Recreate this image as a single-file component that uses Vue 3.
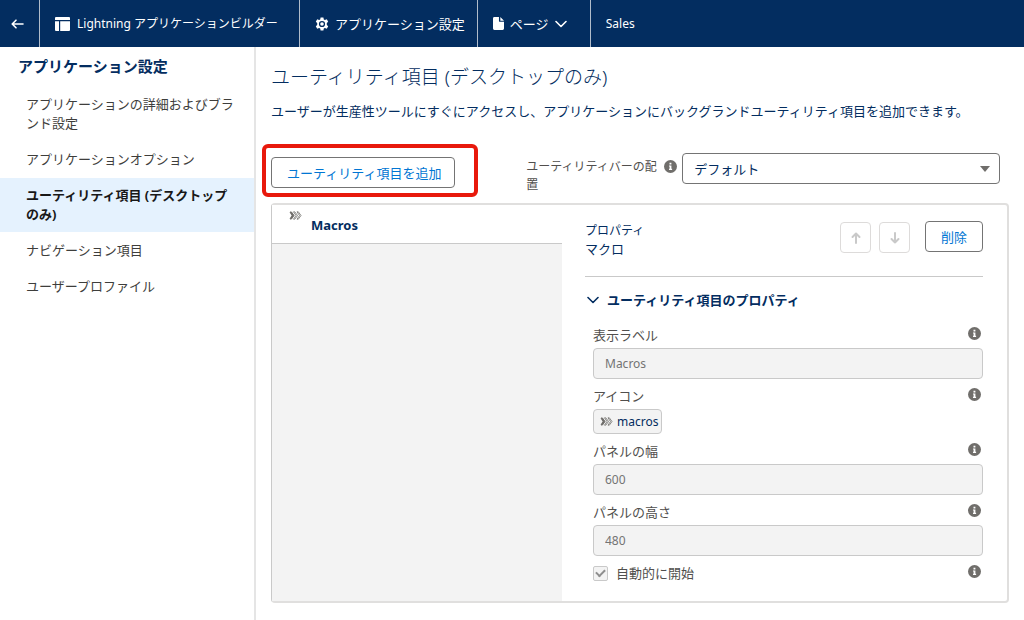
<script setup>
import { ref } from 'vue'

const navItems = [
  { label: 'アプリケーションの詳細およびブランド設定' },
  { label: 'アプリケーションオプション' },
  { label: 'ユーティリティ項目 (デスクトップのみ)', active: true },
  { label: 'ナビゲーション項目' },
  { label: 'ユーザープロファイル' },
]
const alignment = ref('default')
</script>

<template>
  <div class="app">
    <header class="topbar">
      <button class="back" type="button" aria-label="戻る">
        <svg width="13" height="10" viewBox="0 0 13 10" fill="none" stroke="currentColor" stroke-width="1.600" stroke-linecap="round" stroke-linejoin="round">
          <path d="M12 5H1.500M5 1.200L1.200 5 5 8.800" />
        </svg>
      </button>
      <div class="cell builder">
        <svg width="15" height="14" viewBox="0 0 15 14" fill="currentColor">
          <path d="M1 0h13a1 1 0 0 1 1 1v2H0V1a1 1 0 0 1 1-1zM0 4.200h4V14H1a1 1 0 0 1-1-1zM5.200 4.200H15V13a1 1 0 0 1-1 1H5.200z" />
        </svg>
        <span>Lightning アプリケーションビルダー</span>
      </div>
      <button class="cell settings" type="button">
        <svg width="14" height="14" viewBox="0 0 14 14" fill="currentColor" fill-rule="evenodd">
          <path d="M5.600.5h2.800l.4 1.900 1.100.6 1.900-.7 1.400 2.400L11.800 6v2l1.400 1.300-1.400 2.400-1.900-.7-1.100.6-.4 1.900H5.600l-.4-1.900-1.100-.6-1.900.7L.8 9.300 2.200 8V6L.8 4.700l1.400-2.400 1.900.7 1.100-.6zM7 3.900a3.100 3.100 0 1 0 0 6.200 3.100 3.100 0 0 0 0-6.200z" />
          <circle cx="7" cy="7" r="1.800" />
        </svg>
        <span>アプリケーション設定</span>
      </button>
      <button class="cell page" type="button">
        <svg width="11" height="13" viewBox="0 0 12 14" fill="currentColor">
          <path d="M1.500 0H6.500v4.200a1 1 0 0 0 1 1H12v7.300A1.500 1.500 0 0 1 10.500 14h-9A1.500 1.500 0 0 1 0 12.500v-11A1.500 1.500 0 0 1 1.500 0zM8 0l4 3.900H8z" />
        </svg>
        <span>ページ</span>
        <svg width="12" height="8" viewBox="0 0 12 8" fill="none" stroke="currentColor" stroke-width="1.600" stroke-linecap="round" stroke-linejoin="round">
          <path d="M1 1.500l5 5 5-5" />
        </svg>
      </button>
      <div class="cell name">Sales</div>
    </header>

    <div class="body">
      <aside class="sidebar">
        <h2>アプリケーション設定</h2>
        <nav>
          <a v-for="item in navItems" :key="item.label" href="#" :class="{ active: item.active }">{{ item.label }}</a>
        </nav>
      </aside>

      <main class="main">
        <h1>ユーティリティ項目 (デスクトップのみ)</h1>
        <p class="lead">ユーザーが生産性ツールにすぐにアクセスし、アプリケーションにバックグランドユーティリティ項目を追加できます。</p>

        <div class="toolbar">
          <div class="marked">
            <button class="add" type="button">ユーティリティ項目を追加</button>
          </div>
          <div class="align">
            <label for="alignment">ユーティリティバーの配置</label>
            <svg class="info" width="13" height="13" viewBox="0 0 13 13">
              <circle cx="6.500" cy="6.500" r="6.500" fill="#706e6b" />
              <path d="M5.500 2.800h1.900v1.600H5.500zM5 5.400h2.400v3.400h.7v1.100H5V8.800h.6V6.500H5z" fill="#fff" />
            </svg>
            <div class="select">
              <select id="alignment" v-model="alignment">
                <option value="default">デフォルト</option>
              </select>
              <svg width="10" height="6" viewBox="0 0 10 6" fill="#706e6b"><path d="M0 0h10L5 6z" /></svg>
            </div>
          </div>
        </div>

        <section class="panel">
          <div class="list">
            <button class="entry" type="button">
              <svg width="13" height="9" viewBox="0 0 13 9" fill="none" stroke="#706e6b">
                <path d="M1 1h1.500L5 4.500 2.500 8H1l2-3.500z" fill="#706e6b" />
                <path d="M4.500.8h1.300l2.700 3.700-2.700 3.700H4.500L7 4.500zM8 .8h1.300L12 4.500 9.300 8.200H8l2.500-3.700z" stroke-width=".8" />
              </svg>
              <span>Macros</span>
            </button>
          </div>

          <div class="props">
            <div class="head">
              <div class="titles">
                <div class="kind">プロパティ</div>
                <div class="what">マクロ</div>
              </div>
              <button class="move" type="button" disabled aria-label="上へ移動">
                <svg width="10" height="12" viewBox="0 0 10 12" fill="none" stroke="currentColor" stroke-width="2" stroke-linecap="round" stroke-linejoin="round"><path d="M5 11V1.500M1.500 5L5 1.500 8.500 5" /></svg>
              </button>
              <button class="move" type="button" disabled aria-label="下へ移動">
                <svg width="10" height="12" viewBox="0 0 10 12" fill="none" stroke="currentColor" stroke-width="2" stroke-linecap="round" stroke-linejoin="round"><path d="M5 1v9.500M1.500 7L5 10.500 8.500 7" /></svg>
              </button>
              <button class="delete" type="button">削除</button>
            </div>

            <button class="section" type="button">
              <svg width="12" height="8" viewBox="0 0 12 8" fill="none" stroke="currentColor" stroke-width="1.600" stroke-linecap="round" stroke-linejoin="round"><path d="M1 1.500l5 5 5-5" /></svg>
              <span>ユーティリティ項目のプロパティ</span>
            </button>

            <div class="fields">
              <div class="field">
                <div class="caption">
                  <label for="f-label">表示ラベル</label>
                  <svg class="info" width="13" height="13" viewBox="0 0 13 13">
                    <circle cx="6.500" cy="6.500" r="6.500" fill="#706e6b" />
                    <path d="M5.500 2.800h1.900v1.600H5.500zM5 5.400h2.400v3.400h.7v1.100H5V8.800h.6V6.500H5z" fill="#fff" />
                  </svg>
                </div>
                <input id="f-label" type="text" value="Macros" disabled />
              </div>
              <div class="field">
                <div class="caption">
                  <label for="f-icon">アイコン</label>
                  <svg class="info" width="13" height="13" viewBox="0 0 13 13">
                    <circle cx="6.500" cy="6.500" r="6.500" fill="#706e6b" />
                    <path d="M5.500 2.800h1.900v1.600H5.500zM5 5.400h2.400v3.400h.7v1.100H5V8.800h.6V6.500H5z" fill="#fff" />
                  </svg>
                </div>
                <button id="f-icon" class="chip" type="button">
                  <svg width="13" height="9" viewBox="0 0 13 9" fill="none" stroke="#706e6b">
                    <path d="M1 1h1.500L5 4.500 2.500 8H1l2-3.500z" fill="#706e6b" />
                    <path d="M4.500.8h1.300l2.700 3.700-2.700 3.700H4.500L7 4.500zM8 .8h1.300L12 4.500 9.300 8.200H8l2.500-3.700z" stroke-width=".8" />
                  </svg>
                  <span>macros</span>
                </button>
              </div>
              <div class="field">
                <div class="caption">
                  <label for="f-width">パネルの幅</label>
                  <svg class="info" width="13" height="13" viewBox="0 0 13 13">
                    <circle cx="6.500" cy="6.500" r="6.500" fill="#706e6b" />
                    <path d="M5.500 2.800h1.900v1.600H5.500zM5 5.400h2.400v3.400h.7v1.100H5V8.800h.6V6.500H5z" fill="#fff" />
                  </svg>
                </div>
                <input id="f-width" type="text" value="600" disabled />
              </div>
              <div class="field">
                <div class="caption">
                  <label for="f-height">パネルの高さ</label>
                  <svg class="info" width="13" height="13" viewBox="0 0 13 13">
                    <circle cx="6.500" cy="6.500" r="6.500" fill="#706e6b" />
                    <path d="M5.500 2.800h1.900v1.600H5.500zM5 5.400h2.400v3.400h.7v1.100H5V8.800h.6V6.500H5z" fill="#fff" />
                  </svg>
                </div>
                <input id="f-height" type="text" value="480" disabled />
              </div>
              <div class="caption auto">
                <label class="check"><input type="checkbox" checked disabled /><span>自動的に開始</span></label>
                <svg class="info" width="13" height="13" viewBox="0 0 13 13">
                  <circle cx="6.500" cy="6.500" r="6.500" fill="#706e6b" />
                  <path d="M5.500 2.800h1.900v1.600H5.500zM5 5.400h2.400v3.400h.7v1.100H5V8.800h.6V6.500H5z" fill="#fff" />
                </svg>
              </div>
            </div>
          </div>
        </section>
      </main>
    </div>
  </div>
</template>

<style>
body {
  background: #fff;
}
</style>

<style scoped>
* {
  box-sizing: border-box;
}
.app {
  display: flex;
  flex-direction: column;
  min-height: 100vh;
  font-family: "Noto Sans", "Noto Sans CJK JP", sans-serif;
  font-size: 13px;
  line-height: 20px;
  color: #032d60;
}
button,
input,
select {
  font: inherit;
  color: inherit;
  margin: 0;
}
button {
  padding: 0;
  border: 0;
  background: none;
}
svg {
  display: block;
  flex: none;
}
h1,
h2,
p {
  margin: 0;
}

.topbar {
  display: flex;
  height: 47px;
  background: #032d60;
  color: #fff;
}
.back {
  width: 39px;
  display: flex;
  align-items: center;
  padding-left: 11px;
}
.cell {
  display: flex;
  align-items: center;
  gap: 7px;
  padding: 0 12px 0 15px;
  border-left: 1px solid #b0bccb;
  white-space: nowrap;
}
.builder,
.name {
  font-size: 12px;
}
.builder {
  min-width: 260px;
}
.settings {
  gap: 6px;
}
.page {
  min-width: 113px;
  gap: 6px;
}

.body {
  flex: 1;
  display: grid;
  grid-template-columns: 256px minmax(0, 1fr);
}
.sidebar {
  border-right: 2px solid #e5e5e5;
}
.sidebar h2 {
  padding: 8px 18px 10px;
  font-size: 15px;
  line-height: 22px;
  font-weight: 700;
}
.sidebar nav {
  display: flex;
  flex-direction: column;
  gap: 1px;
}
.sidebar a {
  padding: 8px 20px 8px 26px;
  line-height: 19px;
  color: #3e3e3c;
  text-decoration: none;
}
.sidebar a.active {
  background: #e5f2fe;
  color: #181818;
  font-weight: 700;
}

.main {
  padding: 16px 15px;
}
h1 {
  font-size: 19px;
  line-height: 28px;
  font-weight: 300;
}
.lead {
  padding-top: 10px;
}
.toolbar {
  display: flex;
  align-items: flex-start;
  justify-content: space-between;
  padding: 32px 9px 0 0;
  height: 82px;
}
.marked {
  position: relative;
  margin-top: 4px;
}
.marked::after {
  content: "";
  position: absolute;
  inset: -13px -23px -9px -9px;
  border: 4px solid #e8190c;
  border-radius: 6px;
  pointer-events: none;
}
.add {
  display: block;
  height: 31px;
  padding: 0 13px 0 15px;
  border: 1px solid #747474;
  border-radius: 4px;
  color: #0176d3;
}
.align {
  display: flex;
  align-items: flex-start;
  width: 65%;
}
.align label {
  width: 138px;
  padding-top: 5px;
  font-size: 12px;
  line-height: 18px;
  color: #514f4d;
}
.align .info {
  margin: 7px 5px 0 0;
}
.select {
  position: relative;
  flex: 1;
}
.select select {
  display: block;
  width: 100%;
  height: 31px;
  padding: 0 11px;
  border: 1px solid #747474;
  border-radius: 4px;
  background: #fff;
  appearance: none;
}
.select svg {
  position: absolute;
  right: 10px;
  top: 13px;
  pointer-events: none;
}

.panel {
  display: grid;
  grid-template-columns: 290px minmax(0, 1fr);
  border: 2px solid #e0dfde;
  border-left: 1px solid #c9c9c9;
  border-radius: 4px;
}
.list {
  background: #f3f3f3;
}
.entry {
  display: flex;
  align-items: flex-start;
  gap: 9px;
  width: 100%;
  height: 39px;
  padding: 6px 17px;
  background: #fff;
  border-bottom: 1px solid #c9c9c9;
  font-weight: 700;
}
.entry span {
  padding-top: 4px;
}
.props {
  padding: 16px 24px 18px 23px;
}
.head {
  display: flex;
  align-items: flex-start;
  height: 56px;
  border-bottom: 1px solid #c9c9c9;
}
.titles {
  flex: 1;
  line-height: 19px;
}
.kind {
  font-size: 12px;
}
.move {
  width: 31px;
  height: 31px;
  margin: 1px 8px 0 0;
  display: flex;
  align-items: center;
  justify-content: center;
  border: 1px solid #dddbda;
  border-radius: 4px;
  color: #c9c9c9;
}
.delete {
  width: 58px;
  height: 31px;
  margin-left: 7px;
  border: 1px solid #747474;
  border-radius: 4px;
  color: #0176d3;
}
.section {
  display: flex;
  align-items: center;
  gap: 8px;
  margin: 13px 0 15px 2px;
  font-weight: 700;
}
.fields {
  display: flex;
  flex-direction: column;
  gap: 7px;
  padding-left: 8px;
  color: #514f4d;
}
.caption {
  display: flex;
  align-items: flex-start;
  justify-content: space-between;
  height: 23px;
}
.caption .info {
  margin: 2px 2px 0 0;
}
.field input {
  display: block;
  width: 100%;
  height: 31px;
  padding: 0 11px;
  border: 1px solid #c9c9c9;
  border-radius: 4px;
  background: #f3f3f3;
  color: #747474;
  font-size: 12px;
}
.chip {
  display: flex;
  align-items: center;
  gap: 4px;
  height: 25px;
  padding: 0 3px 0 6px;
  border: 1px solid #c9c9c9;
  border-radius: 4px;
  background: #f3f3f3;
  color: #032d60;
  font-size: 12px;
}
.auto {
  height: 20px;
}
.check {
  display: flex;
  align-items: center;
  gap: 8px;
}
.check input {
  appearance: none;
  width: 15px;
  height: 15px;
  border: 1px solid #c9c9c9;
  border-radius: 2px;
  background: #f3f3f3;
  display: grid;
  place-items: center;
}
.check input::before {
  content: "";
  width: 7px;
  height: 4px;
  margin-bottom: 2px;
  border: solid #8e8e8e;
  border-width: 0 0 2px 2px;
  transform: rotate(-45deg);
}
</style>
